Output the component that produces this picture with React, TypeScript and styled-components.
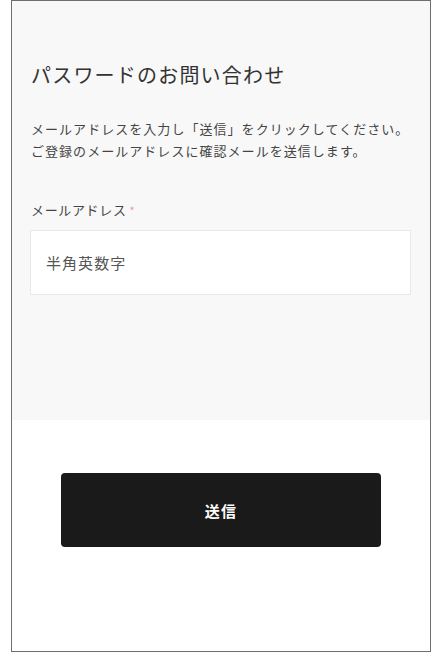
import styled, { createGlobalStyle } from "styled-components";

const GlobalStyle = createGlobalStyle`
  * {
    box-sizing: border-box;
  }
  body {
    margin: 0;
    background: #ffffff;
    font-family: "Noto Sans CJK JP", "Noto Sans", sans-serif;
  }
`;

const Frame = styled.div`
  margin-left: 11px;
  width: 420px;
  height: 652px;
  border: 1px solid #6e6e6e;
  background: #ffffff;
  display: flex;
  flex-direction: column;
`;

const FormArea = styled.section`
  background: #f8f8f8;
  padding: 59px 19px 125px 18px;
  display: flex;
  flex-direction: column;
`;

const Title = styled.h1`
  margin: 0 0 28px 1px;
  font-size: 20px;
  line-height: 30px;
  font-weight: 400;
  letter-spacing: 0.06em;
  color: #333333;
`;

const Lead = styled.p`
  margin: 0 0 38px 1px;
  font-size: 13px;
  line-height: 22px;
  letter-spacing: 0.08em;
  color: #444444;
  white-space: nowrap;
`;

const Label = styled.label`
  display: block;
  margin: 0 0 10px 1px;
  font-size: 13px;
  line-height: 20px;
  letter-spacing: 0.05em;
  color: #444444;
`;

const Required = styled.span`
  margin-left: 3px;
  color: #e99a9a;
  font-size: 11px;
`;

const TextInput = styled.input`
  display: block;
  width: 100%;
  height: 65px;
  padding: 0 15px;
  border: 1px solid #e8e8e8;
  border-radius: 0;
  background: #ffffff;
  font-family: inherit;
  font-size: 15px;
  letter-spacing: 0.07em;
  color: #333333;
  outline: none;

  &::placeholder {
    color: #555555;
  }
`;

const ActionArea = styled.div`
  padding-top: 53px;
  display: flex;
  justify-content: center;
`;

const SubmitButton = styled.button`
  width: 320px;
  height: 74px;
  border: none;
  border-radius: 4px;
  background: #1a1a1a;
  color: #ffffff;
  font-family: inherit;
  font-size: 15px;
  font-weight: 700;
  letter-spacing: 0.08em;
  cursor: pointer;
`;

export default function App() {
  return (
    <>
      <GlobalStyle />
      <Frame>
        <FormArea>
          <Title>パスワードのお問い合わせ</Title>
          <Lead>
            メールアドレスを入力し「送信」をクリックしてください。
            <br />
            ご登録のメールアドレスに確認メールを送信します。
          </Lead>
          <Label htmlFor="email">
            メールアドレス<Required>*</Required>
          </Label>
          <TextInput id="email" type="text" placeholder="半角英数字" />
        </FormArea>
        <ActionArea>
          <SubmitButton type="button">送信</SubmitButton>
        </ActionArea>
      </Frame>
    </>
  );
}
